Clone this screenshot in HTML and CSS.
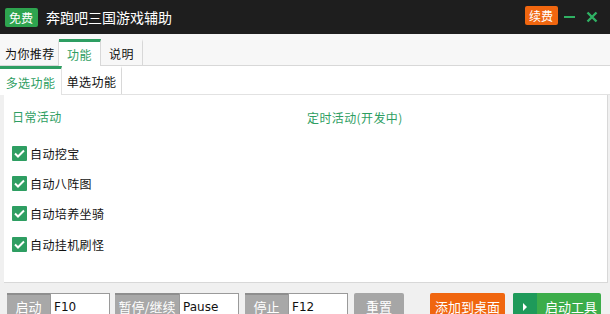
FILE: index.html
```html
<!DOCTYPE html>
<html lang="zh">
<head>
<meta charset="utf-8">
<link rel="stylesheet" href="styles.css">
</head>
<body>
<div class="app">
  <header class="titlebar">
    <span class="badge free">免费</span>
    <span class="title">奔跑吧三国游戏辅助</span>
    <span class="spacer"></span>
    <span class="badge renew">续费</span>
    <span class="winbtn min">
      <svg width="11" height="12" viewBox="0 0 11 12"><rect x="0" y="5" width="11" height="2" fill="#2fb163"/></svg>
    </span>
    <span class="winbtn close">
      <svg width="12" height="12" viewBox="0 0 12 12"><path d="M1.5 1.5 L10.5 10.5 M10.5 1.5 L1.5 10.5" stroke="#2fb163" stroke-width="2.4"/></svg>
    </span>
  </header>
  <nav class="tabs main">
    <span class="tab t1">为你推荐</span>
    <span class="tab t2 active">功能</span>
    <span class="tab t3">说明</span>
  </nav>
  <nav class="tabs sub">
    <span class="tab s1 active">多选功能</span>
    <span class="tab s2">单选功能</span>
  </nav>
  <main class="panel">
    <div class="col">
      <div class="heading">日常活动</div>
      <label class="check"><span class="box"><svg width="15" height="15" viewBox="0 0 15 15"><path d="M3 7.5 L6 10.5 L12 4.5" stroke="#fff" stroke-width="2" fill="none"/></svg></span>自动挖宝</label>
      <label class="check"><span class="box"><svg width="15" height="15" viewBox="0 0 15 15"><path d="M3 7.5 L6 10.5 L12 4.5" stroke="#fff" stroke-width="2" fill="none"/></svg></span>自动八阵图</label>
      <label class="check"><span class="box"><svg width="15" height="15" viewBox="0 0 15 15"><path d="M3 7.5 L6 10.5 L12 4.5" stroke="#fff" stroke-width="2" fill="none"/></svg></span>自动培养坐骑</label>
      <label class="check"><span class="box"><svg width="15" height="15" viewBox="0 0 15 15"><path d="M3 7.5 L6 10.5 L12 4.5" stroke="#fff" stroke-width="2" fill="none"/></svg></span>自动挂机刷怪</label>
    </div>
    <div class="col right">
      <div class="heading">定时活动(开发中)</div>
    </div>
  </main>
  <footer class="bottom">
    <span class="key k1"><span class="klabel">启动</span><span class="kinput">F10</span></span>
    <span class="key k2"><span class="klabel">暂停/继续</span><span class="kinput">Pause</span></span>
    <span class="key k3"><span class="klabel">停止</span><span class="kinput">F12</span></span>
    <span class="btn gray">重置</span>
    <span class="btn orange">添加到桌面</span>
    <span class="btn green"><span class="play"><svg width="8" height="10" viewBox="0 0 8 10"><path d="M2 1 L6 5 L2 9 Z" fill="#fff"/></svg></span><span class="gtext">启动工具</span></span>
  </footer>
</div>
</body>
</html>
```
FILE: styles.css
```css
* { box-sizing: border-box; }
html, body { margin: 0; padding: 0; }
body {
  width: 610px; height: 314px; overflow: hidden;
  font-family: "Noto Sans CJK SC", "Noto Sans", sans-serif;
  background: #f0f0f0;
  color: #111;
}
.app { display: flex; flex-direction: column; height: 314px; }
.titlebar {
  height: 34px; flex: none; background: #1e1e1e;
  display: flex; align-items: center; padding: 0 0 0 5px;
}
.badge {
  font-size: 12px; color: #fff; height: 19px; line-height: 19px;
  padding: 0 4px; border-radius: 2px; white-space: nowrap;
}
.free { background: #2ea44f; width: 33px; }
.renew { background: #f0660f; width: 33px; margin-top: -3px; }
.title { color: #fff; font-size: 14px; margin-left: 8px; white-space: nowrap; }
.spacer { flex: 1; }
.winbtn { display: flex; align-items: center; }
.winbtn.min { margin-left: 6px; }
.winbtn.close { margin-left: 11px; margin-right: 12px; }
.tabs {
  display: flex; flex: none; white-space: nowrap;
}
.tabs.main {
  height: 32px; padding-top: 5px; border-bottom: 1px solid #d8d8d8; background: #f7f7f7;
}
.tab {
  font-size: 12px; letter-spacing: 0.4px; display: flex; align-items: center; justify-content: center;
  border-right: 1px solid #d8d8d8; border-top: 3px solid transparent;
}
.tab.active { background: #fff; border-top-color: #2e9e62; color: #2e9e62; margin-bottom: -1px; }
.t1 { width: 59px; justify-content: flex-start; padding-left: 5px; }
.t2 { width: 42px; }
.t3 { width: 42px; }
.tabs.sub { height: 29px; background: #fff; border-bottom: 1px solid #e2e2e2; }
.s1 { width: 62px; border-right-color: #e2e2e2; }
.s2 { width: 60px; border-right-color: #d8d8d8; }
.panel {
  flex: none; height: 188px; margin-left: 4px; margin-right: 2px;
  background: #fff; border-right: 1px solid #d8d8d8; border-bottom: 1px solid #d8d8d8;
  display: flex; padding: 12px 0 0 8px;
}
.col { width: 295px; display: flex; flex-direction: column; }
.heading { color: #2e9e62; font-size: 12px; letter-spacing: 0.4px; height: 20px; line-height: 20px; margin-bottom: 11px; white-space: nowrap; }
.col.right .heading { margin-top: 1px; }
.check { display: flex; align-items: center; font-size: 12px; letter-spacing: 0.4px; height: 30.4px; white-space: nowrap; }
.box {
  width: 15px; height: 15px; background: #2e9e62; border-radius: 1px;
  display: inline-flex; margin-right: 3px;
}
.bottom {
  display: flex; align-items: flex-start; padding: 10px 0 0 7px;
}
.key { display: flex; height: 24px; flex: none; }
.k2 { margin-left: 5px; }
.k3 { margin-left: 6px; }
.klabel {
  background: linear-gradient(#8e8e8e 0, #8e8e8e 2px, #a8a8a8 2px, #a8a8a8 100%);
  color: #fff; font-size: 13px;
  display: flex; align-items: center; justify-content: center; white-space: nowrap;
  padding-top: 3px;
}
.kinput {
  background: #fff; border: 1px solid #9a9a9a; border-bottom: none; padding: 2px 3px 0;
  display: flex; align-items: center; font-family: "DejaVu Sans", "Liberation Sans", sans-serif; font-size: 12px;
}
.k1 .klabel { width: 43px; }
.k1 .kinput { width: 60px; }
.k2 .klabel { width: 64px; }
.k2 .kinput { width: 60px; }
.k3 .klabel { width: 43px; }
.k3 .kinput { width: 60px; }
.btn {
  height: 24px; color: #fff; font-size: 13px; display: flex; align-items: center;
  justify-content: center; border-radius: 2px 2px 0 0; white-space: nowrap; flex: none; padding-top: 3px;
}
.gray { background: #a6a6a6; width: 50px; margin-left: 6px; }
.orange { background: #f0660f; width: 75px; margin-left: 26px; }
.green { background: #3cad4a; width: 88px; margin-left: 8px; justify-content: flex-start; overflow: hidden; padding-top: 0; }
.play { width: 24px; height: 100%; background: #1e9a5a; display: flex; align-items: center; justify-content: center; padding-top: 3px; }
.gtext { padding-left: 8px; padding-top: 3px; }
```
